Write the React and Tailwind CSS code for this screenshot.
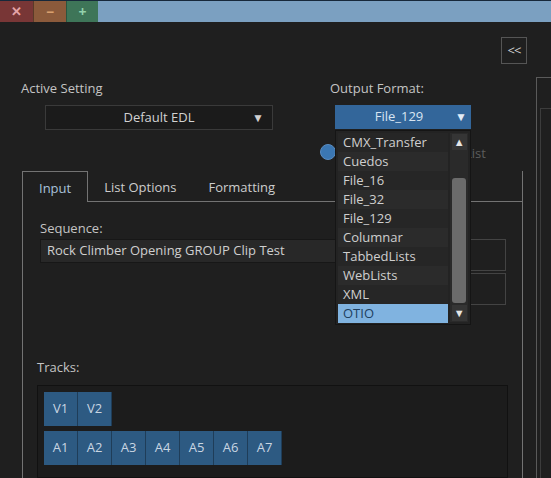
import React from "react";

const formats = ["CMX_Transfer", "Cuedos", "File_16", "File_32", "File_129", "Columnar", "TabbedLists", "WebLists", "XML", "OTIO"];
const video = ["V1", "V2"];
const audio = ["A1", "A2", "A3", "A4", "A5", "A6", "A7"];

function Tile({ label }) {
  return (
    <div className="w-[34px] h-[34px] flex items-center justify-center bg-[#2d5a82] border-r border-[#1f3d58] text-[13px] text-[#c9d6e2]">
      {label}
    </div>
  );
}

function FormatList() {
  return (
    <div className="absolute left-0 top-[25px] w-[136px] h-[195px] bg-[#232323] border border-[#151515] flex p-[2px] gap-[2px] z-10">
      <div className="w-[112px] flex flex-col">
        {formats.map((f, i) => (
          <div
            key={f}
            className={
              "h-[19px] leading-[19px] pl-[5px] text-[13px] " +
              (f === "OTIO"
                ? "bg-[#80b3e0] text-[#21405f]"
                : i % 2 === 0
                ? "bg-[#262626] text-[#cfcfcf]"
                : "bg-[#2b2b2b] text-[#cfcfcf]")
            }
          >
            {f}
          </div>
        ))}
      </div>
      <div className="w-[18px] flex flex-col items-center bg-[#2a2a2a] py-[1px]">
        <div className="w-[15px] h-[16px] bg-[#353535] flex items-center justify-center text-[11px] text-[#e6e6e6]">▲</div>
        <div className="flex-1 w-full flex flex-col px-[2px] pt-[28px] pb-[2px]">
          <div className="flex-1 bg-[#6b6b6b] rounded-[3px]" />
        </div>
        <div className="w-[15px] h-[16px] bg-[#353535] flex items-center justify-center text-[11px] text-[#e6e6e6]">▼</div>
      </div>
    </div>
  );
}

export default function App() {
  return (
    <div className="w-[551px] h-[478px] overflow-hidden bg-[#1f1f1f] text-[#c8c8c8] text-[13px] font-['Open_Sans',sans-serif] flex flex-col">
      {/* title bar */}
      <div className="h-[22px] flex border-t border-[#17283a] shrink-0">
        <div className="w-[33px] bg-[#783636] flex items-center justify-center text-[#e4a3a6] text-[13px] font-bold">✕</div>
        <div className="w-[33px] bg-[#8b5a3b] border-l border-[#5a3a28] flex items-center justify-center text-[#d9a06e] text-[14px] font-bold">−</div>
        <div className="w-[32px] bg-[#3e7558] border-l border-[#2a5540] flex items-center justify-center text-[#93d1ab] text-[14px] font-bold">+</div>
        <div className="flex-1 bg-[#7ba0c1]" />
      </div>

      <div className="flex flex-1 min-h-0">
        {/* left content */}
        <div className="w-[536px] flex flex-col shrink-0">
          <div className="flex justify-end pr-[9px] pt-[15px]">
            <div className="w-[26px] h-[27px] border border-[#555] flex items-center justify-center text-[13px] text-[#d0d0d0] tracking-[-1px]">
              &lt;&lt;
            </div>
          </div>

          {/* settings */}
          <div className="flex pl-[21px] mt-[16px]">
            <div className="w-[252px] flex flex-col">
              <div className="leading-[16px] text-[#c4c4c4]">Active Setting</div>
              <div className="ml-[24px] mt-[9px] h-[25px] bg-[#1b1b1b] border border-[#3a3a3a] flex items-center relative">
                <span className="flex-1 text-center text-[#d2d2d2]">Default EDL</span>
                <span className="absolute right-[8px] text-[12px] text-[#d0d0d0]">▼</span>
              </div>
            </div>
            <div className="ml-[57px] flex flex-col">
              <div className="leading-[16px] text-[#c4c4c4]">Output Format:</div>
              <div className="ml-[5px] mt-[9px] relative w-[136px]">
                <div className="h-[24px] bg-[#33669a] flex items-center">
                  <span className="flex-1 text-center text-[#d8e5f2] pr-[8px]">File_129</span>
                  <span className="absolute right-[4px] text-[12px] text-[#e2ecf6]">▼</span>
                </div>
                <FormatList />
              </div>
            </div>
          </div>

          {/* radio row */}
          <div className="flex items-center ml-[320px] mt-[13px] h-[17px]">
            <div className="w-[16px] h-[16px] rounded-full bg-[#3b77b3] border border-[#5a8cc0] shrink-0" />
            <span className="ml-[6px] pt-[4px] text-[#5c5c5c] whitespace-nowrap">Create Multiple EDL List</span>
          </div>

          {/* tabs */}
          <div className="ml-[22px] mt-[11px] w-[501px] flex flex-col flex-1 min-h-0">
            <div className="flex h-[31px] shrink-0">
              <div className="px-4 pt-[3px] flex items-center border-t border-l border-r border-[#737373] text-[#a9c2da]">Input</div>
              <div className="px-4 pt-[3px] flex items-center border-b border-[#737373] text-[#cdcdcd]">List Options</div>
              <div className="px-4 pt-[3px] flex items-center border-b border-[#737373] text-[#cdcdcd]">Formatting</div>
              <div className="flex-1 border-b border-r border-[#737373]" />
            </div>
            <div className="flex-1 border-l border-r border-[#737373] flex flex-col">
              <div className="ml-[17px] mt-[18px] leading-[16px] text-[#c4c4c4]">Sequence:</div>
              <div className="ml-[17px] mr-[16px] mt-[3px] flex gap-[2px]">
                <div className="flex-1 h-[24px] bg-[#282828] border border-[#171717] flex items-center pl-[6px] text-[#cfcfcf] whitespace-nowrap">
                  Rock Climber Opening GROUP Clip Test
                </div>
                <div className="w-[36px] flex flex-col gap-[2px]">
                  <div className="h-[32px] border border-[#434343]" />
                  <div className="h-[32px] border border-[#434343]" />
                </div>
              </div>

              <div className="ml-[14px] mt-[54px] leading-[16px] text-[#c4c4c4]">Tracks:</div>
              <div className="ml-[14px] mr-[14px] mt-[10px] flex-1 bg-[#1c1c1c] border border-[#111] p-[6px] flex flex-col gap-[5px]">
                <div className="flex">
                  {video.map((t) => (
                    <Tile key={t} label={t} />
                  ))}
                </div>
                <div className="flex">
                  {audio.map((t) => (
                    <Tile key={t} label={t} />
                  ))}
                </div>
              </div>
            </div>
          </div>
        </div>

        {/* right panel */}
        <div className="flex-1 mt-[55px] border-l border-t border-[#5a5a5a] flex flex-col">
          <div className="flex-1 ml-[3px] mt-[30px] border-l border-t border-[#3c3c3c]" />
        </div>
      </div>
    </div>
  );
}
